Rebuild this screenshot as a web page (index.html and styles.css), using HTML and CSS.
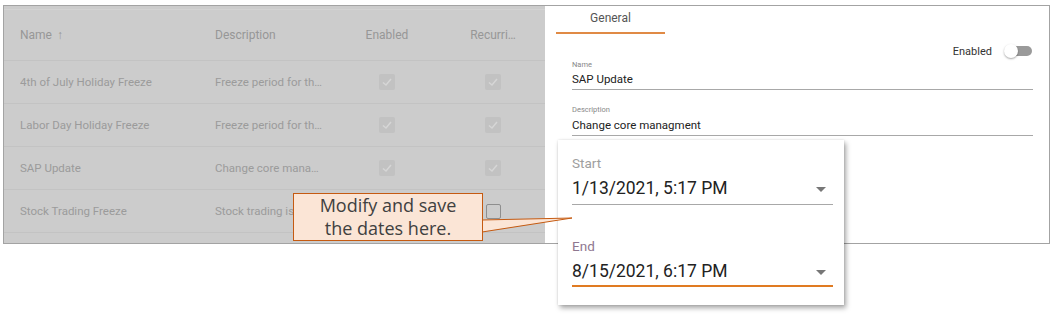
FILE: index.html
```html
<!DOCTYPE html>
<html>
<head>
<meta charset="utf-8">
<link rel="stylesheet" href="styles.css">
</head>
<body>
<div class="stage">
  <div class="frame">
    <div class="list">
      <div class="strip"></div>
      <div class="row head">
        <div class="c-name">Name <span class="arrow">↑</span></div>
        <div class="c-desc">Description</div>
        <div class="c-en">Enabled</div>
        <div class="c-sp"></div>
        <div class="c-rec">Recurri…</div>
      </div>
      <div class="row">
        <div class="c-name">4th of July Holiday Freeze</div>
        <div class="c-desc">Freeze period for th…</div>
        <div class="c-en"><span class="cb on"><svg viewBox="0 0 16 16"><polyline points="4,8.5 7,11 12,5"/></svg></span></div>
        <div class="c-sp"></div>
        <div class="c-rec"><span class="cb on"><svg viewBox="0 0 16 16"><polyline points="4,8.5 7,11 12,5"/></svg></span></div>
      </div>
      <div class="row">
        <div class="c-name">Labor Day Holiday Freeze</div>
        <div class="c-desc">Freeze period for th…</div>
        <div class="c-en"><span class="cb on"><svg viewBox="0 0 16 16"><polyline points="4,8.5 7,11 12,5"/></svg></span></div>
        <div class="c-sp"></div>
        <div class="c-rec"><span class="cb on"><svg viewBox="0 0 16 16"><polyline points="4,8.5 7,11 12,5"/></svg></span></div>
      </div>
      <div class="row">
        <div class="c-name">SAP Update</div>
        <div class="c-desc">Change core mana…</div>
        <div class="c-en"><span class="cb on"><svg viewBox="0 0 16 16"><polyline points="4,8.5 7,11 12,5"/></svg></span></div>
        <div class="c-sp"></div>
        <div class="c-rec"><span class="cb on"><svg viewBox="0 0 16 16"><polyline points="4,8.5 7,11 12,5"/></svg></span></div>
      </div>
      <div class="row">
        <div class="c-name">Stock Trading Freeze</div>
        <div class="c-desc">Stock trading is fro…</div>
        <div class="c-en"><span class="cb off"></span></div>
        <div class="c-sp"></div>
        <div class="c-rec"><span class="cb off"></span></div>
      </div>
    </div>
    <div class="detail">
      <div class="tabs"><div class="tab">General</div></div>
      <div class="enabled-row">
        <span class="en-label">Enabled</span>
        <span class="toggle"><span class="knob"></span></span>
      </div>
      <div class="field">
        <div class="f-label">Name</div>
        <div class="f-value">SAP Update</div>
      </div>
      <div class="field second">
        <div class="f-label">Description</div>
        <div class="f-value">Change core managment</div>
      </div>
    </div>
  </div>

  <div class="popup">
    <div class="dfield">
      <div class="d-label">Start</div>
      <div class="d-value"><span>1/13/2021, 5:17 PM</span><span class="tri"></span></div>
    </div>
    <div class="dfield end">
      <div class="d-label">End</div>
      <div class="d-value"><span>8/15/2021, 6:17 PM</span><span class="tri"></span></div>
    </div>
  </div>

  <svg class="pointer" width="1055" height="316" viewBox="0 0 1055 316">
    <polygon points="481,220 572,218 481,232" fill="#fbe5d6"/>
    <polyline points="482,220 572,218 482,232" fill="none" stroke="#c55a11" stroke-width="1"/>
  </svg>
  <div class="callout">Modify and save<br>the dates here.</div>
</div>
</body>
</html>
```
FILE: styles.css
```css
* { box-sizing: border-box; }
html, body { margin: 0; padding: 0; background: #ffffff; }
body { font-family: Roboto, "Liberation Sans", sans-serif; }

.stage { position: relative; width: 1055px; height: 316px; overflow: hidden; }

.frame {
  margin: 5px 0 0 3px;
  width: 1047px;
  height: 239px;
  border: 1px solid #a3a3a3;
  display: flex;
}

/* left list (dimmed) */
.list { width: 541px; background: #cccccc; color: #9b9b9b; font-size: 11.5px; }
.strip { height: 4px; border-bottom: 1px solid #d3d3d3; }
.row {
  display: grid;
  grid-template-columns: 16px 195px 137px 70px 40px 62px;
  align-items: center;
  height: 43px;
  border-bottom: 1px solid #c3c3c3;
}
.row > .c-name { grid-column: 2; }
.row.head { height: 51px; font-size: 12px; color: #979797; }
.arrow { font-size: 12px; margin-left: 2px; }
.c-name, .c-desc { white-space: nowrap; overflow: hidden; }
.c-en, .c-rec { text-align: center; display: flex; justify-content: center; }
.cb { display: block; width: 16px; height: 16px; border-radius: 2px; }
.cb.on { background: #c2c2c2; }
.cb.on svg { display: block; width: 16px; height: 16px; }
.cb.on polyline { fill: none; stroke: #d6d6d6; stroke-width: 1.5; }
.cb.off { width: 15px; height: 15px; border: 1.5px solid #8e8e8e; border-radius: 2px; }

/* right detail */
.detail { flex: 1; background: #fff; padding: 0 16px 0 27px; position: relative; }
.tabs { margin-left: -16px; display: flex; }
.tab {
  width: 109px;
  text-align: center;
  font-size: 12px;
  color: #555555;
  padding-top: 4px;
  line-height: 16px;
  height: 28px;
  border-bottom: 2px solid #e08a45;
}
.enabled-row {
  display: flex;
  justify-content: flex-end;
  align-items: center;
  height: 14px;
  margin-top: 10px;
  padding-right: 1px;
}
.en-label { font-size: 11px; color: #333; margin-right: 14px; }
.toggle { position: relative; width: 26px; height: 10px; border-radius: 5px; background: #9a9a9a; }
.knob {
  position: absolute; left: -2px; top: -2px;
  width: 14px; height: 14px; border-radius: 50%;
  background: #fff;
  box-shadow: 0 1px 2px rgba(0,0,0,.35);
}
.field { border-bottom: 1px solid #a8a8a8; margin-top: 2px; }
.field.second { margin-top: 15px; }
.f-label { font-size: 7.5px; line-height: 9px; color: #888; }
.f-value { font-size: 11.5px; line-height: 16px; color: #222; margin-top: 2px; padding-bottom: 2px; }
.field.second .f-value { margin-top: 3px; padding-bottom: 2px; }

/* popup */
.popup {
  position: absolute;
  left: 558px; top: 140px;
  width: 286px; height: 165px;
  background: #fff;
  padding: 15px 11px 0 14px;
  box-shadow: 2px 3px 5px rgba(0,0,0,.35), 0 0 2px rgba(0,0,0,.12);
  z-index: 2;
}
.d-label { font-size: 13.5px; line-height: 16px; color: #9e9e9e; }
.dfield.end .d-label { color: #8f7790; }
.d-value {
  display: flex; justify-content: space-between; align-items: center;
  font-size: 17.5px; line-height: 22px; color: #222;
  margin-top: 6px; padding-bottom: 5px; padding-right: 7px;
  border-bottom: 1px solid #a8a8a8;
}
.dfield.end { margin-top: 33px; }
.dfield.end .d-value { border-bottom: 2px solid #e07b22; padding-bottom: 3px; }
.tri {
  width: 0; height: 0;
  border-left: 5px solid transparent;
  border-right: 5px solid transparent;
  border-top: 5px solid #777;
  margin-top: 2px;
}

/* callout */
.pointer { position: absolute; left: 0; top: 0; z-index: 3; }
.callout {
  position: absolute;
  left: 293px; top: 193px;
  width: 190px; height: 48px;
  background: #fbe5d6;
  border: 1px solid #c55a11;
  font-family: "Open Sans", "Liberation Sans", sans-serif;
  font-size: 18px;
  line-height: 23px;
  color: #404040;
  text-align: center;
  padding-top: 0px;
  z-index: 4;
}
```
